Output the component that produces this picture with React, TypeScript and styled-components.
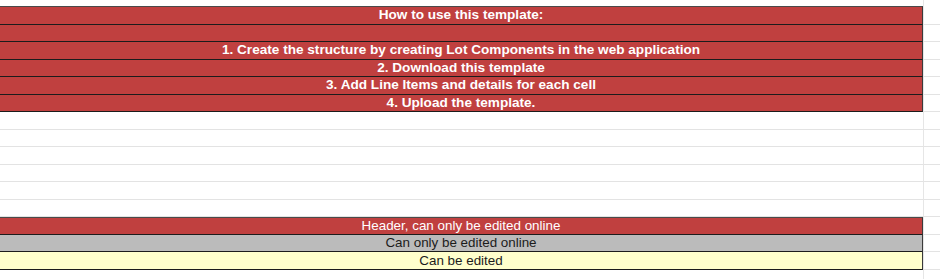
import React, { FC } from "react";
import styled, { createGlobalStyle, css } from "styled-components";

type Tone = "red" | "gray" | "yellow" | "none";

const GlobalStyle = createGlobalStyle`
  html, body {
    margin: 0;
    padding: 0;
    background: #ffffff;
    overflow: hidden;
  }
  body {
    font-family: "Liberation Sans", Arial, sans-serif;
  }
`;

const fills: Record<Tone, string> = {
  red: "#c0403f",
  gray: "#bbbbbb",
  yellow: "#ffffcc",
  none: "#ffffff",
};

const Sheet = styled.div`
  display: flex;
  flex-direction: column;
  width: 940px;
  height: 279px;
  overflow: hidden;
`;

const Row = styled.div<{ $h?: number }>`
  display: flex;
  flex: 0 0 auto;
  height: ${(p) => p.$h ?? 17.5}px;
`;

const MainCell = styled.div<{ $tone: Tone; $first?: boolean; $bold?: boolean; $blank?: boolean }>`
  box-sizing: border-box;
  width: 923px;
  display: flex;
  align-items: center;
  justify-content: center;
  background: ${(p) => fills[p.$tone]};
  color: ${(p) => (p.$tone === "red" ? "#ffffff" : "#1c1c1c")};
  font-size: ${(p) => (p.$bold ? 13.6 : 13.4)}px;
  font-weight: ${(p) => (p.$bold ? 700 : 400)};
  white-space: nowrap;
  line-height: 1;
  ${(p) =>
    p.$blank
      ? css`
          border-bottom: 0;
        `
      : p.$tone === "none"
      ? css`
          border-bottom: 1px solid #e3e3e3;
        `
      : css`
          border-bottom: 1px solid #1c1c1c;
          border-right: 1px solid #3a3a3a;
        `}
  ${(p) =>
    p.$first &&
    css`
      border-top: 1px solid #4a4a4a;
    `}
`;

const SpareCell = styled.div<{ $blank?: boolean }>`
  box-sizing: border-box;
  flex: 1;
  border-left: 1px solid #e6e6e6;
  border-bottom: ${(p) => (p.$blank ? "0" : "1px solid #e3e3e3")};
`;

interface Line {
  text?: string;
  tone: Tone;
  bold?: boolean;
  first?: boolean;
  h?: number;
}

const lines: Line[] = [
  { text: "How to use this template:", tone: "red", bold: true, first: true, h: 18.5 },
  { text: "", tone: "red" },
  { text: "1. Create the structure by creating Lot Components in the web application", tone: "red", bold: true },
  { text: "2. Download this template", tone: "red", bold: true },
  { text: "3. Add Line Items and details for each cell", tone: "red", bold: true },
  { text: "4. Upload the template.", tone: "red", bold: true },
  { tone: "none" },
  { tone: "none" },
  { tone: "none" },
  { tone: "none" },
  { tone: "none" },
  { tone: "none", h: 17 },
  { text: "Header, can only be edited online", tone: "red", first: true, h: 18 },
  { text: "Can only be edited online", tone: "gray" },
  { text: "Can be edited", tone: "yellow" },
  { tone: "none", h: 12 },
];

const App: FC = () => {
  return (
    <>
      <GlobalStyle />
      <Sheet>
        <Row $h={6}>
          <MainCell $tone="none" $blank />
          <SpareCell $blank />
        </Row>
        {lines.map((line, index) => (
          <Row key={index} $h={line.h}>
            <MainCell $tone={line.tone} $bold={line.bold} $first={line.first}>
              {line.text}
            </MainCell>
            <SpareCell />
          </Row>
        ))}
      </Sheet>
    </>
  );
};

export default App;
